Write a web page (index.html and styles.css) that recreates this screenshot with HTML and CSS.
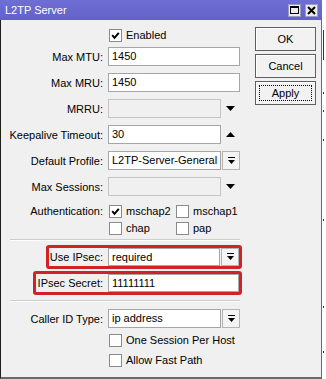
FILE: index.html
```html
<!DOCTYPE html>
<html lang="en">
<head>
<meta charset="UTF-8" />
<title>L2TP Server</title>
<link rel="stylesheet" href="styles.css">
</head>
<body>
<div class="screen">
  <div class="window">
    <div class="titlebar">
      <span class="title">L2TP Server</span>
      <div class="winbtns">
        <span class="wbtn"><span class="max-icon"></span></span>
        <span class="wbtn">
          <svg width="9" height="9" viewBox="0 0 9 9"><path d="M1 1 L8 8 M8 1 L1 8" stroke="#000" stroke-width="2"/></svg>
        </span>
      </div>
    </div>

    <div class="frame">
      <div class="form">
        <div class="row check-row first">
          <span class="lbl"></span>
          <span class="chk"><span class="box"><svg width="9" height="9" viewBox="0 0 9 9"><path d="M1.2 4.2 L3.5 6.8 L7.8 1.8" stroke="#000" stroke-width="2" fill="none"/></svg></span>Enabled</span>
        </div>

        <div class="row"><span class="lbl">Max MTU:</span><span class="field">1450</span></div>
        <div class="row"><span class="lbl">Max MRU:</span><span class="field">1450</span></div>
        <div class="row">
          <span class="lbl">MRRU:</span><span class="field narrow disabled"></span>
          <span class="arrow"><svg width="9" height="5" viewBox="0 0 9 5"><path d="M0 0 H9 L4.5 5 Z" fill="#000"/></svg></span>
        </div>
        <div class="row">
          <span class="lbl">Keepalive Timeout:</span><span class="field narrow">30</span>
          <span class="arrow"><svg width="9" height="5" viewBox="0 0 9 5"><path d="M0 5 H9 L4.5 0 Z" fill="#000"/></svg></span>
        </div>
        <div class="row">
          <span class="lbl">Default Profile:</span><span class="field narrow">L2TP-Server-General</span>
          <span class="drop"><svg width="9" height="8" viewBox="0 0 9 8"><path d="M1 0.5 H8" stroke="#000"/><path d="M1 3 H8 L4.5 7 Z" fill="#000"/></svg></span>
        </div>
        <div class="row">
          <span class="lbl">Max Sessions:</span><span class="field narrow disabled"></span>
          <span class="arrow"><svg width="9" height="5" viewBox="0 0 9 5"><path d="M0 0 H9 L4.5 5 Z" fill="#000"/></svg></span>
        </div>

        <div class="row check-row auth">
          <span class="lbl">Authentication:</span>
          <span class="chk"><span class="box"><svg width="9" height="9" viewBox="0 0 9 9"><path d="M1.2 4.2 L3.5 6.8 L7.8 1.8" stroke="#000" stroke-width="2" fill="none"/></svg></span>mschap2</span>
          <span class="chk"><span class="box"></span>mschap1</span>
        </div>
        <div class="row check-row">
          <span class="lbl"></span>
          <span class="chk"><span class="box"></span>chap</span>
          <span class="chk"><span class="box"></span>pap</span>
        </div>

        <div class="sep"></div>

        <div class="hl hl-ipsec">
          <span class="lbl">Use IPsec:</span><span class="field narrow">required</span>
          <span class="drop"><svg width="9" height="8" viewBox="0 0 9 8"><path d="M1 0.5 H8" stroke="#000"/><path d="M1 3 H8 L4.5 7 Z" fill="#000"/></svg></span>
        </div>
        <div class="hl hl-secret">
          <span class="lbl">IPsec Secret:</span><span class="field secret">11111111</span>
        </div>

        <div class="sep sep-bottom"></div>

        <div class="row caller">
          <span class="lbl">Caller ID Type:</span><span class="field narrow">ip address</span>
          <span class="drop"><svg width="9" height="8" viewBox="0 0 9 8"><path d="M1 0.5 H8" stroke="#000"/><path d="M1 3 H8 L4.5 7 Z" fill="#000"/></svg></span>
        </div>
        <div class="row check-row opt">
          <span class="lbl"></span>
          <span class="chk wide"><span class="box"></span>One Session Per Host</span>
        </div>
        <div class="row check-row opt">
          <span class="lbl"></span>
          <span class="chk wide"><span class="box"></span>Allow Fast Path</span>
        </div>
      </div>

      <div class="buttons">
        <button type="button">OK</button>
        <button type="button">Cancel</button>
        <button type="button" class="focused"><span>Apply</span></button>
      </div>
    </div>
  </div>
  <div class="edge"></div>
</div>
</body>
</html>
```

FILE: styles.css
```css
/* Reset & base */
* {
  box-sizing: border-box;
}
body {
  margin: 0;
  background: #ffffff;
  color: #000;
  font: 11px "Liberation Sans", Arial, sans-serif;
}
.screen {
  display: flex;
  width: 326px;
  height: 379px;
}

/* Window */
.window {
  width: 322px;
  height: 379px;
  display: flex;
  flex-direction: column;
}
.titlebar {
  height: 20px;
  flex: 0 0 20px;
  background: linear-gradient(#6e6ed4, #6262ca);
  color: #fff;
  display: flex;
  align-items: center;
  justify-content: space-between;
  padding: 0 4px 0 5px;
}
.title {
  font-size: 11px;
}
.winbtns {
  display: flex;
  gap: 4px;
}
.wbtn {
  width: 13px;
  height: 13px;
  background: #ececec;
  border: 1px solid #9c9cc0;
  display: flex;
  align-items: center;
  justify-content: center;
}
.max-icon {
  width: 9px;
  height: 8px;
  border: 1px solid #000;
  border-top-width: 2px;
}
.frame {
  flex: 1;
  display: flex;
  background: #f0f0f0;
  border-left: 1px solid #1e1e1e;
  border-right: 1px solid #6a6a6a;
  border-bottom: 2px solid #6a6a6a;
}

/* Form */
.form {
  width: 241px;
  padding-top: 8px;
}
.row {
  display: flex;
  align-items: center;
  height: 19px;
  margin-bottom: 7px;
}
.lbl {
  width: 107px;
  flex: 0 0 auto;
  padding-right: 5px;
  text-align: right;
  white-space: nowrap;
}
.field {
  width: 132px;
  height: 19px;
  line-height: 17px;
  padding-left: 3px;
  background: #fff;
  border: 1px solid #a6a6a6;
  white-space: nowrap;
  overflow: hidden;
}
.field.narrow {
  width: 113px;
}
.field.disabled {
  background: #f0f0f0;
  border-color: #c4c4c4;
}
.arrow {
  width: 19px;
  display: flex;
  justify-content: center;
}
.drop {
  width: 18px;
  height: 19px;
  margin-left: 1px;
  border: 1px solid #b4b4b4;
  background: #f4f4f4;
  display: flex;
  align-items: center;
  justify-content: center;
}

/* Checkboxes */
.check-row {
  height: 16px;
  margin-bottom: 1px;
}
.check-row.first {
  height: 14px;
  margin-bottom: 5px;
}
.check-row.opt {
  margin-bottom: 4px;
}
.chk {
  display: flex;
  align-items: center;
  gap: 4px;
  width: 69px;
  white-space: nowrap;
}
.chk.wide {
  width: auto;
}
.box {
  width: 13px;
  height: 13px;
  margin-left: 1px;
  background: #fff;
  border: 1px solid #8a8a8a;
  display: flex;
  align-items: center;
  justify-content: center;
}

/* Separators */
.sep {
  height: 2px;
  margin: 3px 0 4px 9px;
  width: 230px;
  border-top: 1px solid #cdcdcd;
  border-bottom: 1px solid #fff;
}
.sep-bottom {
  margin: 5px 0 7px 9px;
}

/* Highlighted IPsec fields */
.hl {
  display: flex;
  align-items: center;
  height: 24px;
  border: 3px solid #d2212a;
  border-radius: 3px;
}
.hl .field,
.hl .drop {
  height: 18px;
  line-height: 16px;
}
.hl-ipsec {
  width: 196px;
  margin: 0 0 2px 45px;
}
.hl-ipsec .lbl {
  width: 59px;
}
.hl-secret {
  width: 209px;
  margin-left: 32px;
}
.hl-secret .lbl {
  width: 72px;
}
.field.secret {
  width: 131px;
}
.caller {
  margin-bottom: 4px;
}

/* Buttons */
.buttons {
  margin-left: 13px;
  padding-top: 7px;
  display: flex;
  flex-direction: column;
  gap: 3px;
}
.buttons button {
  width: 61px;
  height: 24px;
  padding: 0;
  font: 11px "Liberation Sans", Arial, sans-serif;
  color: #000;
  background: #f2f2f2;
  border: 1px solid #5e5e5e;
  box-shadow: inset 1px 1px 0 #fff;
}
.buttons button.focused {
  padding: 3px;
}
.buttons button.focused span {
  display: flex;
  align-items: center;
  justify-content: center;
  height: 100%;
  border: 1px dotted #000;
}

/* Edge of the window behind */
.edge {
  width: 4px;
  background:
    linear-gradient(#fff 30px, #333 30px, #333 60px, #fff 60px, #fff 92px, #333 92px, #333 94px, #fff 94px, #fff 110px, #333 110px, #333 112px, #fff 112px, #fff 139px, #333 139px, #333 141px, #fff 141px, #fff 219px, #333 219px, #333 221px, #fff 221px, #fff 306px, #333 306px, #333 308px, #fff 308px, #fff 351px, #333 351px, #333 353px, #fff 353px) no-repeat 1px 0 / 1px 100%,
    #fff;
}
```
